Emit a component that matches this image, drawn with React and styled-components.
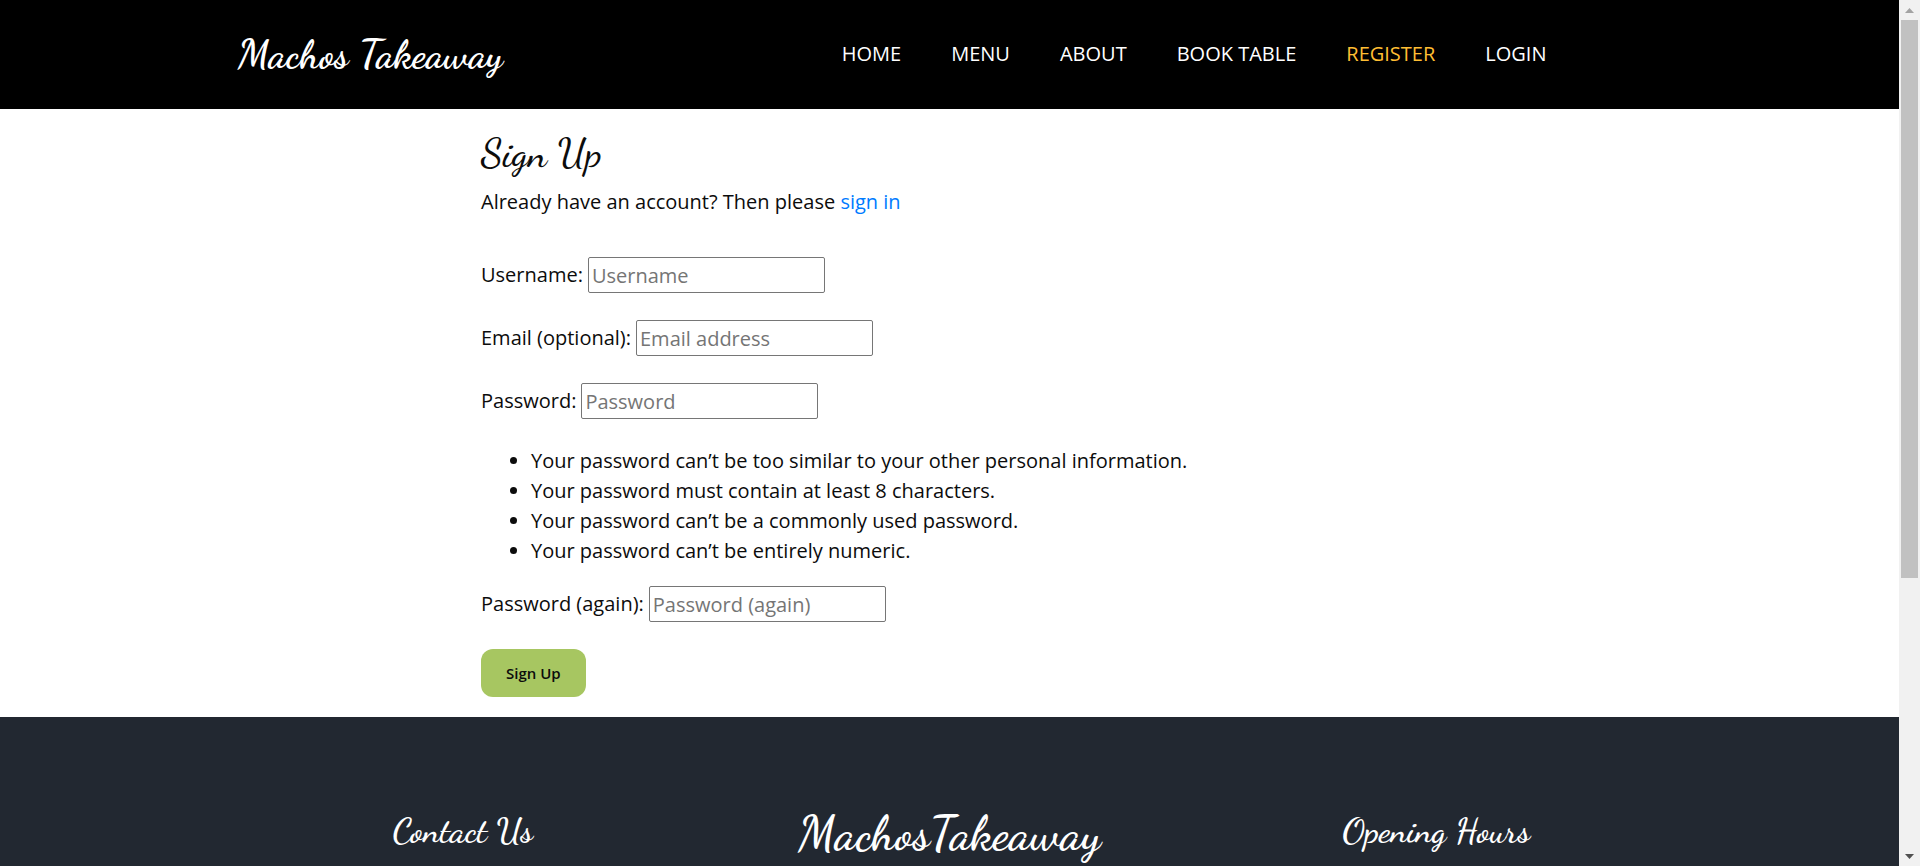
import React from "react";
import styled, { createGlobalStyle } from "styled-components";

const script = `"Dancing Script", "Liberation Serif", serif`;
const sans = `"Open Sans", "Noto Sans", sans-serif`;

const GlobalStyle = createGlobalStyle`
  *, *::before, *::after { box-sizing: border-box; }
  body {
    margin: 0;
    background: #fff;
    color: #0c0c0c;
    font-family: ${sans};
    font-size: 20px;
    line-height: 30px;
  }
`;

const Window = styled.div`
  display: grid;
  grid-template-columns: minmax(0, 1fr) 21px;
  height: 100vh;
  overflow: hidden;
`;

const Page = styled.div`
  display: flex;
  flex-direction: column;
  min-height: 0;
  overflow: hidden;
`;

const Header = styled.header`
  flex: none;
  background: #000;
`;

const HeaderInner = styled.div`
  display: flex;
  align-items: center;
  justify-content: space-between;
  max-width: 1424px;
  margin: 0 auto;
  padding: 30px 90px 31px 0;
`;

const Brand = styled.a`
  color: #fff;
  font: 700 40px/48px ${script};
  text-decoration: none;
  white-space: nowrap;
`;

const Nav = styled.nav`
  display: flex;
`;

const NavLink = styled.a`
  padding: 0 25px;
  color: ${(p) => (p.$active ? "#ffbe33" : "#fff")};
  font-weight: 500;
  text-decoration: none;
  text-transform: uppercase;
  white-space: nowrap;
`;

const Main = styled.main`
  flex: none;
  width: 100%;
  max-width: 937px;
  margin: 0 auto;
  padding: 20px 0;
`;

const Title = styled.h1`
  margin: 0 0 10px;
  font: 500 40px/48px ${script};
`;

const Intro = styled.p`
  margin: 0 0 40px;
`;

const TextLink = styled.a`
  color: #007bff;
  text-decoration: none;
`;

const Field = styled.div`
  display: flex;
  align-items: center;
  gap: 5px;
  margin-bottom: 27px;
`;

const Input = styled.input`
  width: 237px;
  height: 36px;
  padding: 0 3px;
  border: 1px solid #767676;
  border-radius: 2px;
  background: #fff;
  color: #0c0c0c;
  font: inherit;
  &::placeholder { color: #757575; opacity: 1; }
`;

const Rules = styled.ul`
  margin: 0 0 20px;
  padding: 0 0 0 50px;
`;

const SubmitButton = styled.button`
  display: block;
  height: 48px;
  padding: 0 25px;
  border: 0;
  border-radius: 12px;
  background: #a7c661;
  color: #0c0c0c;
  font: 600 15px/24px ${sans};
`;

const Footer = styled.footer`
  flex: 1 0 auto;
  background: #222831;
  color: #fff;
`;

const FooterColumns = styled.div`
  display: grid;
  grid-template-columns: repeat(3, 1fr);
  max-width: 1460px;
  margin: 0 auto;
  padding-top: 90px;
  text-align: center;
`;

const FooterHeading = styled.h2`
  margin: 0;
  font: 600 35px/48px ${script};
`;

const FooterBrand = styled.a`
  color: #fff;
  font: 600 48px/54px ${script};
  text-decoration: none;
`;

const Scrollbar = styled.div`
  display: flex;
  flex-direction: column;
  align-items: center;
  background: #f1f1f1;
`;

const Arrow = styled.svg`
  flex: none;
  width: 21px;
  height: 20px;
`;

const Track = styled.div`
  flex: 1;
  width: 17px;
`;

const Thumb = styled.div`
  height: ${(p) => p.$size}%;
  background: #c1c1c1;
`;

const links = ["Home", "Menu", "About", "Book Table", "Register", "Login"];

const rules = [
  "Your password can’t be too similar to your other personal information.",
  "Your password must contain at least 8 characters.",
  "Your password can’t be a commonly used password.",
  "Your password can’t be entirely numeric.",
];

function FormField({ id, label, type = "text", placeholder }) {
  return (
    <Field>
      <label htmlFor={id}>{label}</label>
      <Input id={id} name={id} type={type} placeholder={placeholder} />
    </Field>
  );
}

export default function App() {
  return (
    <>
      <GlobalStyle />
      <Window>
        <Page>
          <Header>
            <HeaderInner>
              <Brand href="#home">Machos Takeaway</Brand>
              <Nav>
                {links.map((name) => (
                  <NavLink key={name} href="#" $active={name === "Register"}>
                    {name}
                  </NavLink>
                ))}
              </Nav>
            </HeaderInner>
          </Header>

          <Main>
            <Title>Sign Up</Title>
            <Intro>
              Already have an account? Then please <TextLink href="#login">sign in</TextLink>
            </Intro>
            <form onSubmit={(e) => e.preventDefault()}>
              <FormField id="username" label="Username:" placeholder="Username" />
              <FormField id="email" type="email" label="Email (optional):" placeholder="Email address" />
              <FormField id="password1" type="password" label="Password:" placeholder="Password" />
              <Rules>
                {rules.map((rule) => (
                  <li key={rule}>{rule}</li>
                ))}
              </Rules>
              <FormField id="password2" type="password" label="Password (again):" placeholder="Password (again)" />
              <SubmitButton type="submit">Sign Up</SubmitButton>
            </form>
          </Main>

          <Footer>
            <FooterColumns>
              <FooterHeading>Contact Us</FooterHeading>
              <FooterBrand href="#home">MachosTakeaway</FooterBrand>
              <FooterHeading>Opening Hours</FooterHeading>
            </FooterColumns>
          </Footer>
        </Page>

        <Scrollbar aria-hidden="true">
          <Arrow viewBox="0 0 21 20">
            <path d="M6 13h9l-4.500-5z" fill="#a3a3a3" />
          </Arrow>
          <Track>
            <Thumb $size={67.5} />
          </Track>
          <Arrow viewBox="0 0 21 20">
            <path d="M6 8h9l-4.500 5z" fill="#505050" />
          </Arrow>
        </Scrollbar>
      </Window>
    </>
  );
}
